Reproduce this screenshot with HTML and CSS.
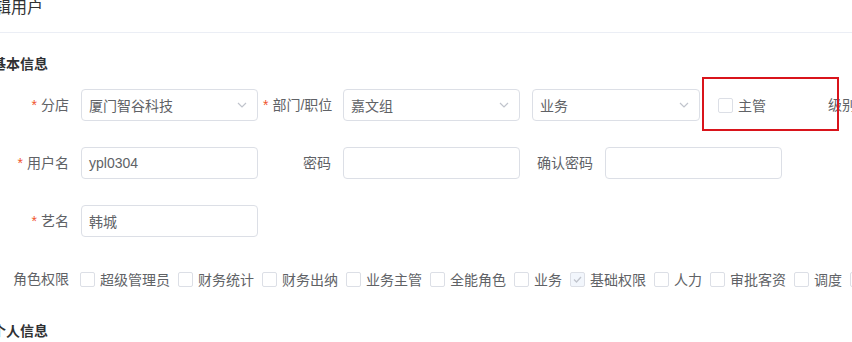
FILE: index.html
```html
<!DOCTYPE html>
<html lang="zh-CN">
<head>
    <meta charset="UTF-8">
    <meta name="viewport" content="width=device-width, initial-scale=1.0">
    <title>编辑用户</title>
    <link rel="stylesheet" href="styles.css">
</head>
<body>
    <div class="page">
        <div class="page-header">
            <span class="page-title">编辑用户</span>
        </div>

        <div class="section-title">基本信息</div>
        <form class="user-form">
            <div class="form-row">
                <div class="form-item">
                    <label class="form-label required">分店</label>
                    <div class="form-control">
                        <div class="select">
                            <span>厦门智谷科技</span>
                            <svg width="10" height="6" viewBox="0 0 10 6"><polyline points="1,1 5,5 9,1" fill="none" stroke="#c0c4cc" stroke-width="1.2"/></svg>
                        </div>
                    </div>
                </div>
                <div class="form-item">
                    <label class="form-label required">部门/职位</label>
                    <div class="form-control wide">
                        <div class="select">
                            <span>嘉文组</span>
                            <svg width="10" height="6" viewBox="0 0 10 6"><polyline points="1,1 5,5 9,1" fill="none" stroke="#c0c4cc" stroke-width="1.2"/></svg>
                        </div>
                        <div class="select narrow">
                            <span>业务</span>
                            <svg width="10" height="6" viewBox="0 0 10 6"><polyline points="1,1 5,5 9,1" fill="none" stroke="#c0c4cc" stroke-width="1.2"/></svg>
                        </div>
                        <label class="checkbox manager">
                            <span class="checkbox-box"></span>
                            <span>主管</span>
                        </label>
                    </div>
                </div>
                <div class="form-item">
                    <label class="form-label">级别</label>
                    <div class="form-control">
                        <div class="select"><span></span></div>
                    </div>
                </div>
            </div>

            <div class="form-row">
                <div class="form-item">
                    <label class="form-label required">用户名</label>
                    <div class="form-control">
                        <div class="input">ypl0304</div>
                    </div>
                </div>
                <div class="form-item">
                    <label class="form-label">密码</label>
                    <div class="form-control">
                        <div class="input"></div>
                    </div>
                </div>
                <div class="form-item">
                    <label class="form-label">确认密码</label>
                    <div class="form-control">
                        <div class="input"></div>
                    </div>
                </div>
            </div>

            <div class="form-row">
                <div class="form-item">
                    <label class="form-label required">艺名</label>
                    <div class="form-control">
                        <div class="input">韩城</div>
                    </div>
                </div>
            </div>

            <div class="form-row">
                <div class="form-item">
                    <label class="form-label">角色权限</label>
                    <div class="checkbox-group">
                        <label class="checkbox"><span class="checkbox-box"></span><span>超级管理员</span></label>
                        <label class="checkbox"><span class="checkbox-box"></span><span>财务统计</span></label>
                        <label class="checkbox"><span class="checkbox-box"></span><span>财务出纳</span></label>
                        <label class="checkbox"><span class="checkbox-box"></span><span>业务主管</span></label>
                        <label class="checkbox"><span class="checkbox-box"></span><span>全能角色</span></label>
                        <label class="checkbox"><span class="checkbox-box"></span><span>业务</span></label>
                        <label class="checkbox"><span class="checkbox-box checked"><svg width="9" height="7" viewBox="0 0 9 7"><polyline points="1,3.5 3.5,6 8,1" fill="none" stroke="#c0c4cc" stroke-width="1.3"/></svg></span><span>基础权限</span></label>
                        <label class="checkbox"><span class="checkbox-box"></span><span>人力</span></label>
                        <label class="checkbox"><span class="checkbox-box"></span><span>审批客资</span></label>
                        <label class="checkbox"><span class="checkbox-box"></span><span>调度</span></label>
                        <label class="checkbox"><span class="checkbox-box"></span><span>客服</span></label>
                    </div>
                </div>
            </div>
        </form>

        <div class="section-title second">个人信息</div>

        <div class="mark-box"></div>
    </div>
</body>
</html>
```

FILE: styles.css
```css
html, body {
    margin: 0;
    padding: 0;
    overflow: hidden;
    background: #fff;
}
body {
    font-family: "Liberation Sans", "Noto Sans CJK SC", sans-serif;
    font-size: 14px;
    color: #606266;
}
.page {
    position: relative;
    width: 852px;
    height: 342px;
    overflow: hidden;
}
.page-header {
    height: 33px;
    border-bottom: 1px solid #ebeef5;
}
.page-title {
    display: block;
    margin-left: -21px;
    margin-top: -1px;
    font-size: 16px;
    line-height: 18px;
    color: #303133;
    white-space: nowrap;
}
.section-title {
    margin: 21px 0 15px -8px;
    line-height: 20px;
    font-weight: bold;
    color: #303133;
}
.section-title.second {
    margin-top: 5px;
}
.user-form {
    margin: 0;
    padding-left: 1px;
}
.form-row {
    display: flex;
    margin-bottom: 26px;
    white-space: nowrap;
}
.form-item {
    display: flex;
    align-items: center;
    margin-right: 5px;
    flex-shrink: 0;
}
.form-label {
    width: 80px;
    box-sizing: border-box;
    padding-right: 12px;
    text-align: right;
    line-height: 32px;
    flex-shrink: 0;
}
.form-label.required::before {
    content: "*";
    color: #f0552d;
    margin-right: 4px;
}
.form-control {
    display: flex;
    align-items: center;
    width: 177px;
    flex-shrink: 0;
}
.form-control.wide {
    width: 440px;
}
.select, .input {
    box-sizing: border-box;
    width: 177px;
    height: 32px;
    border: 1px solid #dcdfe6;
    border-radius: 4px;
    padding: 0 10px 0 7px;
    display: flex;
    align-items: center;
    justify-content: space-between;
    color: #606266;
    flex-shrink: 0;
}
.select.narrow {
    width: 168px;
    margin-left: 12px;
}
.checkbox-group {
    display: flex;
    align-items: center;
    height: 32px;
    margin-left: -1px;
}
.checkbox {
    display: flex;
    align-items: center;
    margin-right: 8px;
    color: #606266;
    flex-shrink: 0;
}
.checkbox.manager {
    margin-left: 18px;
}
.checkbox-box {
    box-sizing: border-box;
    width: 15px;
    height: 15px;
    border: 1px solid #dcdfe6;
    border-radius: 2px;
    background: #fff;
    margin-right: 5px;
    display: flex;
    align-items: center;
    justify-content: center;
}
.checkbox-box.checked {
    background: #f2f6fc;
}
.mark-box {
    position: absolute;
    left: 702px;
    top: 77px;
    width: 137px;
    height: 54px;
    box-sizing: border-box;
    border: 2px solid #d9141b;
}
```
